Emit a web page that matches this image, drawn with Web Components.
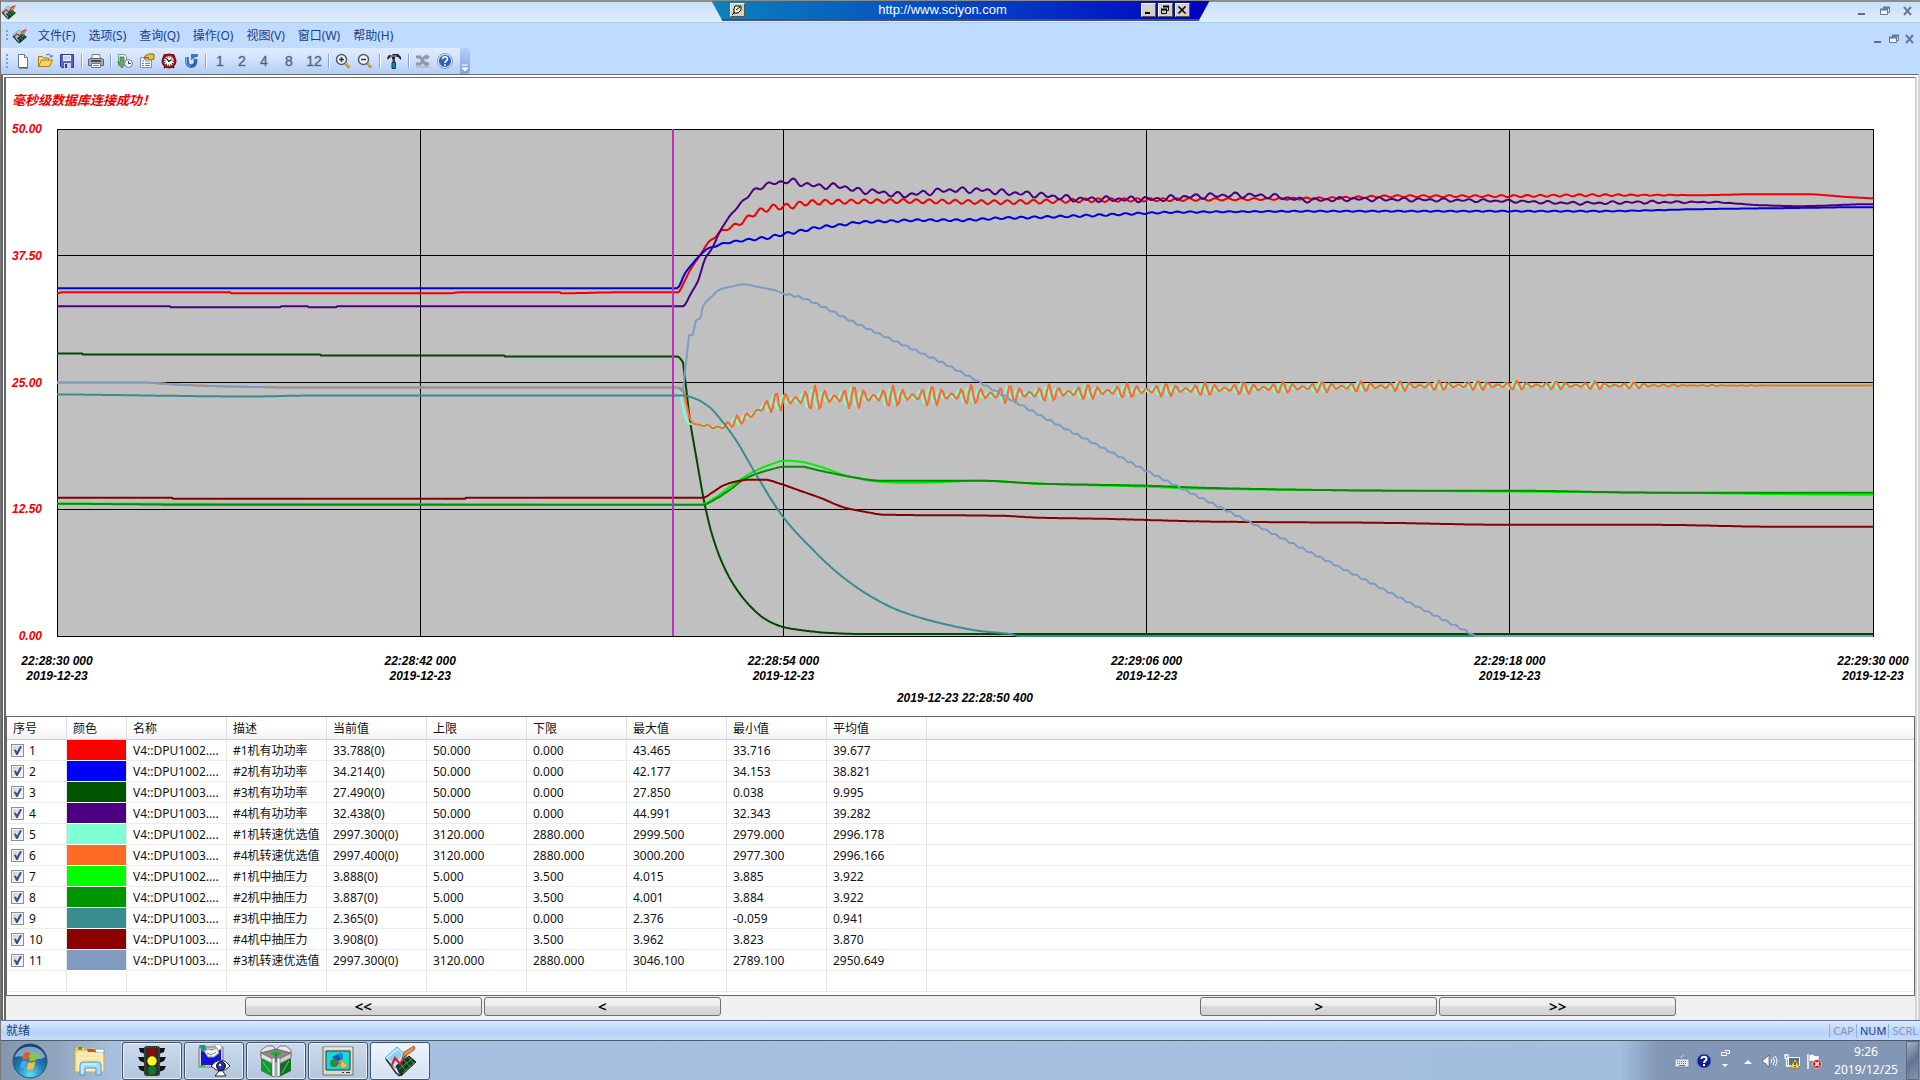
<!DOCTYPE html>
<html lang="zh-CN">
<head>
<meta charset="utf-8">
<title>趋势</title>
<style>
  html, body { margin: 0; }
  body { font: 12px/16px "Noto Sans", "Noto Sans CJK SC", sans-serif; color: #111; }
</style>
</head>
<body>
<trend-app></trend-app>

<script>
// [box size, svg body]
const ICONS = {
  app: [16, `<path d="M1 7 7 2l6 4-6 6z" fill="#8fd8ee" stroke="#5a9ab4" stroke-width=".6"/><path d="M2 9l3-3 3 2 3-5 3-1" fill="none" stroke="#d22" stroke-width="1.400"/><path d="M5 10l6-4 4 3-7 6z" fill="#123c1c"/><path d="M6 12l6-5M8 9l3 3M10 8l3 2" stroke="#3fa060" stroke-width=".7"/><path d="M9 5l6-4-1 3-3 2z" fill="#d9823a"/><path d="M1 8l5 6 2 1" fill="none" stroke="#333" stroke-width="1.200"/>`],
  file: [16, `<path d="M3.500 1.500h6l3 3v10h-9z" fill="#fff" stroke="#6b7a90"/><path d="M9.500 1.500v3h3" fill="#dbe6f5" stroke="#6b7a90"/><path d="M4 15h9" stroke="#444"/>`],
  open: [16, `<path d="M1.500 13.500v-10h4l1 1.500h5v2" fill="#f7dc86" stroke="#a87a16"/><path d="M1.500 13.500l3-6.500h11l-3 6.500z" fill="#ffd45c" stroke="#a87a16"/><path d="M9 2c3-1.500 5-.5 5.500 2M12.500 3l2 1.500 1-2.500" fill="none" stroke="#4478b8"/>`],
  save: [16, `<path d="M1.500 1.500h13v13h-12l-1-1z" fill="#5a62c4" stroke="#343b8c"/><path d="M4 2h8v6H4z" fill="#eef2ff"/><path d="M5 4h6M5 6h6" stroke="#a5b0dc"/><path d="M5 10h7v5H5z" fill="#c9d0ee"/><path d="M6 11h2v4H6z" fill="#343b8c"/>`],
  print: [16, `<path d="M4.500 1.500h7l1 4.500h-9z" fill="#fff" stroke="#777"/><path d="M.5 6.500l2-1h11l2 1v6h-15z" fill="#a9adb5" stroke="#5c6068"/><path d="M3 8h10" stroke="#4a4d55" stroke-width="2"/><path d="M3.500 10.500h9v4h-9z" fill="#f7fafc" stroke="#777"/><path d="M5 12.500h6" stroke="#4a8ccc"/><path d="M13 9h1" stroke="#4c4"/>`],
  fetch: [16, `<path d="M1.500 1.500h6l2 2v9h-8z" fill="#eef4fb" stroke="#7d90ac"/><path d="M3 4v5H.5L5 15l4-6H7V4z" fill="#5fae5c" stroke="#397c38" stroke-width=".8"/><circle cx="11.500" cy="10.500" r="4" fill="#e8eefa" stroke="#6f7fb0"/><path d="M11.500 8v2.500h2.500" fill="none" stroke="#445"/>`],
  props: [16, `<path d="M1.500 4.500h11v10h-11z" fill="#f8fafd" stroke="#7d90ac"/><path d="M3 8h2M6 8h5M3 10.500h2M6 10.500h5M3 12.500h2M6 12.500h5" stroke="#6b86b0"/><path d="M6 3l4-2h5v5l-3 1-3-1H5z" fill="#e8c23c" stroke="#8c6a10"/><path d="M6 4.500h4" stroke="#8c6a10"/>`],
  alarm: [16, `<path d="M3 1h3L2 5V3zM13 1h-3l4 4V3z" fill="#c01010"/><path d="M3 15l2-2M13 15l-2-2" stroke="#111" stroke-width="1.500"/><circle cx="8" cy="8" r="6" fill="#fff" stroke="#c00c0c" stroke-width="2"/><circle cx="8" cy="8" r="7" fill="none" stroke="#300" stroke-width=".8"/><circle cx="8" cy="8" r="4.200" fill="none" stroke="#111" stroke-width="1.200" stroke-dasharray="1 1.200"/><path d="M5.500 5.500L8 8.500l2.500-2" fill="none" stroke="#111" stroke-width="1.200"/>`],
  refresh: [16, `<path d="M4 4v5c0 5.500 8.500 5.500 8.500 0V6" fill="none" stroke="#2d62b8" stroke-width="3.500"/><path d="M3.500 4v5c0 3 2 4 4 4" fill="none" stroke="#86b6ee" stroke-width="1"/><path d="M8 7V1h7v2.500l-3 1z" fill="#3d76c8"/>`],
  zoomin: [16, `<circle cx="6.500" cy="6.500" r="5" fill="#eef4fb" stroke="#525b66" stroke-width="1.500"/><path d="M4 6.500h5M6.500 4v5" stroke="#333" stroke-width="1.500"/><path d="M10.500 10.500l4 4" stroke="#b88a20" stroke-width="3"/><path d="M10.500 10l4.500 4" stroke="#f0cf6a"/>`],
  zoomout: [16, `<circle cx="6.500" cy="6.500" r="5" fill="#eef4fb" stroke="#525b66" stroke-width="1.500"/><path d="M4 6.500h5" stroke="#333" stroke-width="1.500"/><path d="M10.500 10.500l4 4" stroke="#b88a20" stroke-width="3"/><path d="M10.500 10l4.500 4" stroke="#f0cf6a"/>`],
  hammer: [16, `<path d="M1 5l2-3h3l1-1 5 0 3 3v3l-3-3H9v2H6V4L3 5 2 7z" fill="#222"/><path d="M4 3h7" stroke="#bbb"/><path d="M6.500 6h2.500v4H6.500z" fill="#444"/><path d="M6 9.500h3.500V15.500H6z" fill="#1c86b4" stroke="#0b3850"/>`],
  shuffle: [16, `<path d="M1 4h4l5 7h3M1 11h4l2-2M8 6l2-2h2" fill="none" stroke="#9098a8" stroke-width="3"/><path d="M11 1l4 3-4 3zM11 8l4 3-4 3z" fill="#9098a8"/><path d="M1 14h14" stroke="#a5acbc"/>`],
  help: [16, `<circle cx="8" cy="8" r="6.800" fill="#2a5fc8" stroke="#dbe3f0" stroke-width="1.500"/><circle cx="8" cy="8" r="7.500" fill="none" stroke="#5a6d92" stroke-width=".6"/><path d="M5.500 6.200C5.500 3 10.500 3 10.500 6c0 2-2.500 1.800-2.500 4" fill="none" stroke="#fff" stroke-width="1.700"/><path d="M7.100 11.200h1.800v1.600H7.100z" fill="#fff"/>`],
  min: [12, `<path d="M2 9h7" stroke="#5a6f92" stroke-width="2"/>`],
  restore: [12, `<path d="M4.500 2.500h6v5h-2" fill="none" stroke="#66799a"/><path d="M1.500 4.500h7v5h-7z" fill="#eef5ff" stroke="#66799a"/><path d="M1 4.500h8M4 2.500h7" stroke="#66799a" stroke-width="2"/>`],
  close: [12, `<path d="M2 2l7 8M9 2l-7 8" stroke="#66799a" stroke-width="2"/>`],
  pin: [12, `<path d="M4 2h6v4L7 9H3V5z" fill="#fff6c0" stroke="#000"/><path d="M5 6l4-3M1 11l3-3" stroke="#000"/>`],
  rmin: [12, `<path d="M3 9h5" stroke="#000" stroke-width="2"/>`],
  rrestore: [12, `<path d="M4.500 2.500h5v4h-2" fill="none" stroke="#000"/><path d="M4 2.500h6" stroke="#000" stroke-width="2"/><path d="M2.500 5.500h5v4h-5z" fill="none" stroke="#000"/><path d="M2 5.500h6" stroke="#000" stroke-width="2"/>`],
  rclose: [12, `<path d="M2.500 2.500l7 7M9.500 2.500l-7 7" stroke="#000" stroke-width="1.600"/>`],
  start: [36, `<defs><radialGradient id="o" cx=".5" cy=".9" r=".9"><stop offset="0" stop-color="#5fe0f8"/><stop offset=".45" stop-color="#1f7fb8"/><stop offset="1" stop-color="#103a66"/></radialGradient></defs><circle cx="18" cy="18" r="17" fill="url(#o)" stroke="#31536f"/><path d="M3 14C6 0 30 0 33 14 24 20 12 11 3 14z" fill="#d9e8f2" opacity=".55"/><path d="M12 10c2-1.500 4-1 6 0l-2 7c-2-1-4-1-6 0z" fill="#e8592a"/><path d="M19 10.500c2 1 4 1 7-.5l-2 7c-2 1-5 1.500-7 .5z" fill="#8cc63c"/><path d="M9.500 18.500c2-1 4-1 6 0l-2 7c-2-1-4-1-6 0z" fill="#49a5e8"/><path d="M16.500 19c2 1 4 1 7-.5l-2 7c-2 1.500-5 1.500-7 .5z" fill="#fbc02d"/>`],
  folder: [34, `<path d="M2 4l4-2 6 2v3H2z" fill="#f5dd86" stroke="#c9a545"/><path d="M5 3h4v5H5z" fill="#3f9c58"/><path d="M2 6h14l2-2h13v24H2z" fill="#f6e29a" stroke="#cfae52"/><path d="M14 5h8l2 3h-9z" fill="#c65238"/><path d="M22 5h9v4h-8z" fill="#fff" stroke="#6ba0cc"/><path d="M4 9h26v18H4z" fill="#fbedb6"/><path d="M6 12h22M6 16h22" stroke="#f0dc92"/><path d="M7 31V21q0-3 3-3h15q3 0 3 3v10h-5v-7H12v7z" fill="#a9dcf5" stroke="#4d98c8"/><path d="M9 29v-7q0-2 3-2h11" fill="none" stroke="#e9f8ff"/>`],
  traffic: [32, `<path d="M3 3h6v6L4 7zM29 3h-6v6l5-2zM2 12h7v6l-5-2zM30 12h-7v6l5-2zM2 21h7v6l-5-2zM30 21h-7v6l5-2z" fill="#111"/><rect x="8" y="1" width="16" height="30" rx="3" fill="#2a2a2a"/><rect x="9" y="2" width="14" height="28" rx="2" fill="none" stroke="#777" stroke-dasharray="1 1"/><circle cx="16" cy="7" r="4.500" fill="#8c0c0c"/><circle cx="16" cy="16" r="4.700" fill="#ffff20"/><circle cx="16" cy="25" r="4.500" fill="#0a7a28"/>`],
  watch: [32, `<path d="M1 2h24v20H1z" fill="#d8d8d0" stroke="#777"/><path d="M3 4h20v16H3z" fill="#1414d8"/><path d="M1 0h6l2 5-5 2z" fill="#1d9590"/><path d="M17 0l5-1 2 4-4 3z" fill="#fff" stroke="#999" stroke-width=".6"/><path d="M6 6l4-2 4 1 5-2 2 5-5 4H10z" fill="#f3f3f3" stroke="#999"/><path d="M9 8l4 2 5-3" fill="none" stroke="#888"/><path d="M2 21h5" stroke="#2d2" stroke-width="2"/><path d="M21 26l-4 5h11l-4-6z" fill="#fff" stroke="#222"/><path d="M13 21q10-12 19 0-9 10-19 0z" fill="#fff" stroke="#222"/><circle cx="23" cy="21" r="4.500" fill="#2030b8" stroke="#111"/><circle cx="22" cy="20" r="1.200" fill="#fff"/>`],
  hall: [32, `<path d="M1 5l6-4h6l3 4 4-4h6l5 4v6H1z" fill="#e8e8e8" stroke="#777"/><path d="M1 8l15-4 15 4-15 9z" fill="#8f888c" stroke="#666"/><path d="M10 8l6-2 6 2-6 4z" fill="#1fae2f"/><path d="M16 8v7" stroke="#555"/><path d="M1 8l12 6v18L1 26z" fill="#109a30"/><path d="M1 8l12 6v5L1 13z" fill="#e4e4e4" stroke="#777"/><path d="M31 8l-12 6v18l12-6z" fill="#0b7424"/><path d="M31 8l-12 6v5l12-6z" fill="#d0d0d0" stroke="#777"/><path d="M12 13h3v19l-3-1zM17 13h3v18l-3 1z" fill="#fff" stroke="#555" stroke-width=".6"/><path d="M3 17l7 10M22 28l7-12" stroke="#7de08c" stroke-width=".8"/>`],
  monitor: [32, `<path d="M1 2h30v28H1z" fill="#dcd8cc" stroke="#6f6f6f"/><path d="M2 3h28" stroke="#fff"/><path d="M4 6h24v19H4z" fill="#19d8d8" stroke="#333"/><path d="M10 12l6-3 5 4-6 4z" fill="#145aa0"/><path d="M17 7l4 2v6l-4-3z" fill="#2088d8"/><circle cx="12" cy="18" r="4" fill="#2a9048"/><path d="M15 16l3 2-5 4z" fill="#d8342a"/><path d="M20 14l6 8q-5 2-8 0z" fill="#f5c320" stroke="#a87a08" stroke-width=".5"/><path d="M20 27.500h2M24 27.500h4" stroke="#333"/>`],
  trend: [32, `<path d="M1 13 13 2l10 9-12 12z" fill="#bfe8fa" stroke="#5aa8d8"/><path d="M4 13 14 5l5 5-9 9z" fill="#8fd0f2"/><path d="M12 21l13-10 7 6-15 14z" fill="#123c1c" stroke="#222"/><path d="M15 24l13-10M19 28l12-11M16 18l6 8M20 15l6 7M24 12l6 7" stroke="#58b878" stroke-width=".7"/><path d="M2 14l10 14 4 3" fill="none" stroke="#333" stroke-width="1.600"/><path d="M7 22l4-9 5 6 6-10 3-2" fill="none" stroke="#d81f2a" stroke-width="2"/><path d="M20 7l10-6q2 2 0 4l-9 6-3 3z" fill="#e8924a" stroke="#8c3d18" stroke-width=".7"/>`],
  keyboard: [16, `<path d="M7 6V4l3-2" fill="none" stroke="#c5ccd6"/><rect x="1" y="6" width="14" height="8" rx="1" fill="#e4e8ee" stroke="#63738c" stroke-width=".7"/><path d="M3 8.500h10M3 10.500h10" stroke="#63738c" stroke-dasharray="1 1"/><path d="M5 12.500h6" stroke="#63738c"/>`],
  bighelp: [16, `<circle cx="8" cy="8" r="7" fill="#101c98" stroke="#5a74c8"/><path d="M5.500 6C5.500 3 10.500 3 10.500 6c0 2-2.500 1.800-2.500 4" fill="none" stroke="#fff" stroke-width="2"/><path d="M7 11h2v2H7z" fill="#fff"/>`],
  lang: [16, `<path d="M6.500-2.500h5v3h-2M3.500-.5h5v3h-5z" fill="none" stroke="#fff"/><path d="M4 11h6l-3 3z" fill="#fff"/>`],
  up: [16, `<path d="M4 11l4-4 4 4z" fill="#fff"/>`],
  sound: [16, `<path d="M1 6h2l4-4v12l-4-4H1z" fill="#fff" stroke="#4a5c78" stroke-width=".7"/><path d="M9 6q1 2 0 4M11 4q3 4 0 8M13 3q4 5 0 10" fill="none" stroke="#fff"/>`],
  net: [16, `<path d="M4.500 4.500h11v8h-11z" fill="#5c6e8a" stroke="#fff"/><path d="M1 1v3q0 2 1.500 2v7H7M4 1v3q0 2-1.500 2M2 1v2" fill="none" stroke="#fff" stroke-width="1.300"/><path d="M11 6l5 9H6z" fill="#ffd83a" stroke="#8c6c00" stroke-width=".6"/><path d="M11 9v3M11 13v1" stroke="#222" stroke-width="1.400"/>`],
  flag: [16, `<path d="M2 1v15" stroke="#fff" stroke-width="1.500"/><path d="M3 2q3-2 5 0t5 0v7q-3 2-5 0T3 9z" fill="#fff" stroke="#56667e" stroke-width=".5"/><circle cx="11" cy="11" r="4.500" fill="#d8202a" stroke="#fff" stroke-width=".6"/><path d="M9 9l4 4M13 9l-4 4" stroke="#fff" stroke-width="1.500"/>`],
  more: [10, `<path d="M2 3h6M5 9l3-3H2z" fill="#fff" stroke="#fff"/>`]
};

class SysIcon extends HTMLElement {
  constructor() {
    super();
    this.attachShadow({ mode: 'open' });
  }
  connectedCallback() {
    const [box, body] = ICONS[this.getAttribute('name')];
    this.shadowRoot.innerHTML = `
      <style>
        :host { display:inline-flex; flex:none; }
        svg { display:block; overflow:visible; }
      </style>
      <svg width="${box}" height="${box}" viewBox="0 0 ${box} ${box}" aria-hidden="true">${body}</svg>`;
  }
}
customElements.define('sys-icon', SysIcon);

// every element below only differs in its static markup
class Part extends HTMLElement {
  constructor() {
    super();
    this.attachShadow({ mode: 'open' }).innerHTML = this.html();
  }
}

customElements.define('remote-bar', class extends Part {
  html() {
    return `
      <style>
        :host { display:flex; align-items:center; gap:2px; height:20px; width:498px; box-sizing:border-box; padding:0 20px 2px 18px;
          clip-path:polygon(0 0, 100% 0, 487px 100%, 11px 100%);
          background:linear-gradient(#0000 18px, #4a5068 18px), linear-gradient(90deg, #0c82bc, #0438c4 60%, #0000c0); }
        a { flex:1; text-align:center; color:#fff; text-decoration:none; font:13px/16px "Liberation Sans", sans-serif; }
        button { width:15px; height:14px; padding:0; display:flex; align-items:center; justify-content:center;
          background:#d4d0c8; border:1px solid; border-color:#fff #555 #555 #fff; }
      </style>
      <button aria-label="Pin"><sys-icon name="pin"></sys-icon></button>
      <a href="#">http://www.sciyon.com</a>
      <button aria-label="Minimize"><sys-icon name="rmin"></sys-icon></button>
      <button aria-label="Restore"><sys-icon name="rrestore"></sys-icon></button>
      <button aria-label="Close"><sys-icon name="rclose"></sys-icon></button>`;
  }
});

customElements.define('title-bar', class extends Part {
  html() {
    return `
      <style>
        :host { display:flex; align-items:center; height:23px; box-sizing:border-box; padding:0 6px 0 0; position:relative;
          border-top:2px solid #8c8d88; border-bottom:1px solid #a8ccf2; background:linear-gradient(#cbdff8, #e3edf9); }
        .gap { flex:1; }
        .win { display:flex; gap:11px; }
        .win button { padding:0; border:0; background:none; width:12px; height:16px; }
        remote-bar { position:absolute; top:-1px; left:calc(50% - 249px); }
      </style>
      <sys-icon name="app"></sys-icon>
      <span class="gap"></span>
      <span class="win">
        <button aria-label="最小化"><sys-icon name="min"></sys-icon></button>
        <button aria-label="还原"><sys-icon name="restore"></sys-icon></button>
        <button aria-label="关闭"><sys-icon name="close"></sys-icon></button>
      </span>
      <remote-bar></remote-bar>`;
  }
});

const MENUS = ['文件(F)', '选项(S)', '查询(Q)', '操作(O)', '视图(V)', '窗口(W)', '帮助(H)'];

customElements.define('menu-bar', class extends Part {
  html() {
    return `
      <style>
        :host { display:flex; align-items:center; height:25px; padding:0 4px 0 5px; background:#bfdbff; }
        .grip { width:2px; height:12px; margin-right:4px; background:repeating-linear-gradient(#7f9fd0 0 2px, #0000 2px 4px); }
        nav { flex:1; display:flex; margin-left:3px; }
        nav button { border:0; background:none; padding:0 6px 0 7px; font:inherit; color:#1c3e86; white-space:nowrap; }
        .win { display:flex; gap:4px; align-self:flex-end; }
        .win button { padding:0; border:0; background:none; width:12px; height:16px; }
      </style>
      <span class="grip"></span><sys-icon name="app"></sys-icon>
      <nav>${MENUS.map(m => `<button>${m}</button>`).join('')}</nav>
      <span class="win">
        <button aria-label="最小化"><sys-icon name="min"></sys-icon></button>
        <button aria-label="还原"><sys-icon name="restore"></sys-icon></button>
        <button aria-label="关闭"><sys-icon name="close"></sys-icon></button>
      </span>`;
  }
});

const TOOLS = ['file', 'open', 'save', '|', 'print', '|', 'fetch', 'props', 'alarm', 'refresh', '|',
  '1', '2', '4', '8', '12', '|', 'zoomin', 'zoomout', '|', 'hammer', '|', 'shuffle', 'help'];

customElements.define('tool-bar', class extends Part {
  html() {
    const items = TOOLS.map(t => {
      if (t === '|') return '<i></i>';
      if (ICONS[t]) return `<button aria-label="${t}"><sys-icon name="${t}"></sys-icon></button>`;
      return `<button class="num">${t}</button>`;
    });
    return `
      <style>
        :host { display:flex; height:26px; background:#bfdbff; }
        .strip { display:flex; align-items:center; padding-left:5px; border-radius:0 4px 4px 0; background:linear-gradient(#dfecff, #cfe1fc 45%, #b3cdf4); }
        .grip { width:2px; height:14px; margin-right:4px; background:repeating-linear-gradient(#7f9fd0 0 2px, #0000 2px 4px); }
        button { width:22px; height:22px; padding:0; border:0; background:none; display:flex; align-items:center; justify-content:center; }
        .num { font:14px/16px "Liberation Sans", sans-serif; color:#4f5b6c; -webkit-text-stroke:1px #5f6b7c55; }
        .num:nth-of-type(12) { width:28px; }
        i { width:1px; height:14px; margin:0 3px; background:#7fa5dc; box-shadow:1px 0 #fff; }
        .more { width:10px; height:26px; margin-left:4px; align-items:flex-end; padding-bottom:2px; border-radius:0 4px 4px 0;
          background:linear-gradient(#b5d0f5, #7fa4dc); }
      </style>
      <div class="strip"><span class="grip"></span>${items.join('')}
        <button class="more" aria-label="更多"><sys-icon name="more"></sys-icon></button></div>`;
  }
});

// drawing space of the plot; curve nodes are given in it
const BOX = { x: 57, y: 129, w: 1816, h: 506 };

const interp = (nodes, x) => {
  for (let i = 1; i < nodes.length; i++) {
    const [x0, y0] = nodes[i - 1], [x1, y1] = nodes[i];
    if (x <= x1) return y0 + (y1 - y0) * (x - x0) / (x1 - x0);
  }
  return nodes[nodes.length - 1][1];
};

// monotone cubic: rounds the curve without overshoot
const smooth = (nodes, x) => {
  const slope = i => (nodes[i + 1][1] - nodes[i][1]) / (nodes[i + 1][0] - nodes[i][0]);
  const tangent = i => {
    if (i === 0 || i === nodes.length - 1) return 0;
    const a = slope(i - 1), b = slope(i);
    return a * b <= 0 ? 0 : 2 * a * b / (a + b);
  };
  for (let i = 1; i < nodes.length; i++) {
    const [x0, y0] = nodes[i - 1], [x1, y1] = nodes[i];
    if (x > x1) continue;
    const d = x1 - x0, t = (x - x0) / d;
    return y0 * (1 + 2 * t) * (1 - t) ** 2 + y1 * t * t * (3 - 2 * t) +
      d * (tangent(i - 1) * t * (1 - t) ** 2 - tangent(i) * t * t * (1 - t));
  }
  return nodes[nodes.length - 1][1];
};
const wave = (x, period, shift = 0) => Math.sin((x - shift) / period * 2 * Math.PI);

const POWER_AMP = [[57, 0], [690, 0], [710, 1], [745, 2], [770, 3], [860, 2], [1100, 2], [1250, 1], [1600, 1], [1700, 0], [1873, 0]];
const P4_AMP = [[57, 0], [690, 0], [710, 1], [800, 2], [1180, 2], [1500, 1], [1650, 1], [1750, 0], [1873, 0]];
const SPEED_AMP = [[57, 0], [700, 0], [715, 4], [760, 7], [780, 11], [815, 13], [900, 11], [1000, 10], [1100, 8], [1200, 7], [1300, 6], [1500, 5], [1600, 4], [1650, 3], [1670, 1], [1800, 0], [1873, 0]];
const SPEED = [[57, 382], [142, 382], [175, 384], [230, 386], [300, 387], [677, 387], [683, 389], [686, 402], [690, 418], [693, 423], [705, 425], [718, 427], [735, 421], [750, 415], [765, 406], [783, 400], [815, 398], [900, 396], [1000, 394], [1146, 390], [1300, 387], [1500, 385], [1600, 385], [1873, 385]];

const surge = (x, c) => {
  const env = Math.pow(Math.cos((x - 815) / 39 * Math.PI), 2);
  return -interp(SPEED_AMP, x) * (0.2 + 0.8 * env) * Math.cos((x - c) / 9.75 * 2 * Math.PI);
};

const CURVES = [
  { color: '#f00000', nodes: [[57, 293], [62, 292], [230, 292], [231, 293], [450, 293], [460, 292], [560, 292], [561, 293], [620, 292], [678, 292], [684, 282], [690, 270], [698, 258], [705, 247], [713, 238], [722, 231], [733, 226], [742, 222], [750, 216], [760, 211], [775, 207], [790, 206], [805, 203], [820, 202], [900, 201], [1000, 202], [1100, 200], [1250, 199], [1330, 198], [1400, 196], [1500, 196], [1600, 195], [1700, 195], [1760, 194], [1805, 194], [1850, 197], [1873, 198]],
    ripple: x => -interp(POWER_AMP, x) * wave(x, 13, 757) },
  { color: '#0000e0', nodes: [[57, 288], [677, 288], [685, 273], [692, 264], [700, 255], [705, 250], [715, 246], [725, 243], [745, 240], [770, 237], [783, 234], [800, 231], [820, 227], [840, 225], [860, 222], [890, 221], [920, 220], [960, 220], [1000, 218], [1040, 217], [1100, 215], [1146, 213], [1180, 212], [1350, 211], [1600, 211], [1700, 209], [1780, 208], [1873, 207]],
    ripple: x => -interp(POWER_AMP, x) * wave(x, 13, 719) * .5 },
  { color: '#004800', nodes: [[57, 353], [82, 353], [83, 354], [320, 354], [321, 355], [504, 355], [505, 356], [677, 356], [683, 362], [685, 378], [687, 395], [690, 420], [696, 455], [705, 505], [713, 537], [724, 566], [735, 586], [750, 605], [765, 618], [783, 626], [800, 629], [830, 632], [862, 633], [1873, 633]] },
  { color: '#480080', nodes: [[57, 306], [170, 306], [171, 307], [280, 307], [281, 306], [308, 306], [309, 307], [336, 307], [337, 306], [683, 306], [690, 295], [698, 280], [706, 257], [714, 245], [722, 226], [728, 220], [735, 209], [745, 199], [760, 187], [775, 183], [790, 181], [800, 183], [820, 186], [840, 186], [855, 190], [880, 192], [900, 195], [930, 192], [950, 190], [980, 190], [1000, 192], [1030, 194], [1060, 197], [1080, 199], [1150, 199], [1200, 196], [1240, 195], [1270, 196], [1310, 200], [1350, 199], [1450, 200], [1510, 201], [1580, 203], [1650, 202], [1710, 202], [1760, 205], [1800, 206], [1873, 204]],
    ripple: x => interp(P4_AMP, x) * (wave(x, 13, 784) + wave(x, 21) * .6) },
  { color: '#7fffd4', nodes: SPEED.map(([x, y]) => [x > 670 && x < 700 ? x - 4 : x, y]), ripple: x => surge(x + 3, 815) * .8 },
  { color: '#ff6a24', nodes: SPEED, ripple: x => surge(x, 815) },
  { color: '#00f000', nodes: [[57, 503], [700, 504], [715, 497], [730, 486], [750, 473], [770, 464], [785, 460], [800, 461], [820, 466], [850, 476], [880, 481], [900, 482], [920, 482], [980, 480], [1040, 483], [1146, 486], [1200, 488], [1400, 490], [1660, 492], [1873, 494]] },
  { color: '#009000', nodes: [[57, 503], [195, 504], [440, 504], [703, 504], [716, 498], [730, 489], [745, 478], [770, 469], [785, 466], [800, 466], [820, 470], [850, 476], [880, 480], [980, 480], [1040, 483], [1146, 485], [1200, 487], [1300, 489], [1400, 490], [1510, 490], [1660, 492], [1873, 492]] },
  { color: '#388e8e', nodes: [[57, 394], [150, 395], [250, 396], [310, 395], [683, 395], [695, 398], [710, 407], [720, 418], [735, 438], [755, 472], [783, 516], [810, 546], [840, 574], [870, 595], [900, 610], [940, 622], [980, 630], [1010, 633], [1020, 635], [1873, 635]] },
  { color: '#840000', nodes: [[57, 497], [172, 497], [173, 498], [465, 498], [466, 497], [703, 497], [712, 492], [723, 485], [735, 481], [750, 479], [765, 479], [780, 483], [800, 490], [820, 497], [845, 507], [865, 511], [885, 514], [1000, 515], [1040, 517], [1100, 518], [1222, 521], [1380, 522], [1508, 524], [1650, 524], [1783, 526], [1873, 526]] },
  { color: '#7f9cc0', nodes: [[57, 382], [142, 382], [175, 384], [230, 386], [300, 387], [677, 387], [683, 391], [685, 370], [688, 345], [689, 335], [693, 334], [696, 320], [700, 318], [703, 306], [712, 296], [720, 289], [733, 286], [743, 284], [760, 287], [775, 290], [783, 293], [800, 297], [820, 305], [850, 320], [900, 343], [950, 366], [1000, 393], [1046, 418], [1108, 450], [1146, 470], [1225, 509], [1291, 542], [1361, 577], [1414, 604], [1472, 633], [1476, 635], [1873, 635]],
    ripple: x => x > 783 && x < 1472 ? wave(x, 9) : 0 }
];

const curvePath = ({ nodes, ripple }) => {
  const xs = new Set(nodes.map(n => n[0]));
  for (let x = BOX.x; x < BOX.x + BOX.w; x += 2) xs.add(x);
  return 'M' + [...xs].sort((a, b) => a - b)
    .map(x => `${x} ${(smooth(nodes, x) + (ripple ? ripple(x) : 0)).toFixed(1)}`).join('L');
};

customElements.define('trend-chart', class extends Part {
  html() {
    const { x, y, w, h } = BOX;
    const grid = [1, 2, 3, 4].map(i => `M${x + w * i / 5} ${y}v${h}`).join('') +
      [1, 2, 3].map(i => `M${x} ${y + h * i / 4}h${w}`).join('');
    const times = ['22:28:30', '22:28:42', '22:28:54', '22:29:06', '22:29:18', '22:29:30'];
    return `
      <style>
        :host { display:grid; grid-template:51px minmax(300px, 1fr) 80px / 51px 1fr 42px; background:#fff;
          font:italic bold 12px/15px "Liberation Sans", "Noto Sans CJK SC", sans-serif; }
        .msg { grid-column:1 / -1; padding:15px 0 0 6px; font-size:13px; line-height:16px; color:#f00000; }
        .ys { display:flex; flex-direction:column; justify-content:space-between; align-items:flex-end; margin:-8px 15px -8px 0;
          line-height:16px; color:#f00000; }
        .plot { position:relative; background:#c0c0c0; }
        svg { position:absolute; inset:0; width:100%; height:100%; overflow:visible; }
        path, rect { fill:none; vector-effect:non-scaling-stroke; }
        .grid { stroke:#000; stroke-width:1; shape-rendering:crispEdges; }
        .curve { stroke-width:2; stroke-linejoin:round; }
        .cursor { stroke:#c030c0; stroke-width:2; shape-rendering:crispEdges; }
        .xs { grid-column:2; padding-top:18px; color:#000; text-align:center; }
        .ticks { display:flex; justify-content:space-between; }
        .ticks div { width:0; display:flex; flex-direction:column; align-items:center; white-space:nowrap; }
        .now { margin-top:7px; }
      </style>
      <div class="msg">毫秒级数据库连接成功！</div>
      <div class="ys"><span>50.00</span><span>37.50</span><span>25.00</span><span>12.50</span><span>0.00</span></div>
      <div class="plot">
        <svg viewBox="${x} ${y} ${w} ${h}" preserveAspectRatio="none">
          <rect class="grid" x="${x}" y="${y}" width="${w}" height="${h}"/>
          <path class="grid" d="${grid}"/>
          ${CURVES.map(c => `<path class="curve" stroke="${c.color}" d="${curvePath(c)}"/>`).join('')}
          <path class="cursor" d="M673 ${y}v${h}"/>
        </svg>
      </div>
      <div class="xs">
        <div class="ticks">${times.map(t => `<div><span>${t} 000</span><span>2019-12-23</span></div>`).join('')}</div>
        <div class="now">2019-12-23 22:28:50 400</div>
      </div>`;
  }
});

const COLS = ['序号', '颜色', '名称', '描述', '当前值', '上限', '下限', '最大值', '最小值', '平均值'];
const ROWS = [
  ['#ff0000', 'V4::DPU1002....', '#1机有功功率', '33.788(0)', '50.000', '0.000', '43.465', '33.716', '39.677'],
  ['#0000ff', 'V4::DPU1002....', '#2机有功功率', '34.214(0)', '50.000', '0.000', '42.177', '34.153', '38.821'],
  ['#005500', 'V4::DPU1003....', '#3机有功功率', '27.490(0)', '50.000', '0.000', '27.850', '0.038', '9.995'],
  ['#4b0082', 'V4::DPU1003....', '#4机有功功率', '32.438(0)', '50.000', '0.000', '44.991', '32.343', '39.282'],
  ['#7fffd4', 'V4::DPU1002....', '#1机转速优选值', '2997.300(0)', '3120.000', '2880.000', '2999.500', '2979.000', '2996.178'],
  ['#ff6a24', 'V4::DPU1003....', '#4机转速优选值', '2997.400(0)', '3120.000', '2880.000', '3000.200', '2977.300', '2996.166'],
  ['#00ff00', 'V4::DPU1002....', '#1机中抽压力', '3.888(0)', '5.000', '3.500', '4.015', '3.885', '3.922'],
  ['#009600', 'V4::DPU1002....', '#2机中抽压力', '3.887(0)', '5.000', '3.500', '4.001', '3.884', '3.922'],
  ['#388e8e', 'V4::DPU1003....', '#3机中抽压力', '2.365(0)', '5.000', '0.000', '2.376', '-0.059', '0.941'],
  ['#8b0000', 'V4::DPU1003....', '#4机中抽压力', '3.908(0)', '5.000', '3.500', '3.962', '3.823', '3.870'],
  ['#7f9cc0', 'V4::DPU1003....', '#3机转速优选值', '2997.300(0)', '3120.000', '2880.000', '3046.100', '2789.100', '2950.649']
];

customElements.define('point-table', class extends Part {
  html() {
    const rows = ROWS.map(([color, ...cells], i) => `
      <tr><td class="no"><label><input type="checkbox" checked>${i + 1}</label></td>
        <td class="sw" style="background-color:${color}"></td>
        ${cells.map(c => `<td>${c}</td>`).join('')}<td></td></tr>`).join('');
    return `
      <style>
        :host { display:block; background:#fff; border:1px solid #666; padding-bottom:3px; }
        table { width:100%; table-layout:fixed; border-collapse:separate; border-spacing:0; }
        th, td { box-sizing:border-box; height:21px; padding:0 0 0 6px; text-align:left; font-weight:normal; white-space:nowrap;
          line-height:16px; border-right:1px solid #e6e6e6; border-bottom:1px solid #ececec; }
        th { height:23px; padding-top:1px; border-right-color:#dfe0e2; border-bottom-color:#d0d0d0; background:linear-gradient(#fff 45%, #f1f2f4); }
        td { padding-top:1px; }
        th:last-child, td:last-child { border-right:0; }
        .c6 { width:60px; }
        .c10 { width:100px; }
        .no { padding-left:4px; }
        .sw { border-bottom-color:#fff; }
        label { display:flex; align-items:center; gap:5px; }
        input { appearance:none; width:13px; height:13px; margin:0; box-sizing:border-box; border:1px solid #8a8f96;
          background:linear-gradient(135deg, #c9cfd8, #fafbfc); box-shadow:inset 0 0 0 1px #f4f4f4; position:relative; }
        input:checked::before { content:""; position:absolute; inset:1px; background:#3c4f86;
          clip-path:polygon(10% 45%, 30% 40%, 45% 62%, 78% 0, 100% 6%, 52% 100%, 36% 100%); }
      </style>
      <table>
        <colgroup><col class="c6"><col class="c6">${'<col class="c10">'.repeat(8)}<col></colgroup>
        <thead><tr>${COLS.map(c => `<th>${c}</th>`).join('')}<th></th></tr></thead>
        <tbody>${rows}<tr>${'<td></td>'.repeat(11)}</tr></tbody>
      </table>`;
  }
});

customElements.define('page-nav', class extends Part {
  html() {
    return `
      <style>
        :host { display:grid; grid-template-columns:repeat(8, 1fr); gap:2px; padding:1px 0 4px; background:#f0f0f0; }
        button { height:19px; padding:0; border:1px solid #707070; border-radius:3px; color:#000; font:600 15px/15px "Noto Sans", sans-serif;
          background:linear-gradient(#f4f4f4, #ebebeb 50%, #dcdcdc 50%, #d0d0d0); }
        .b2 { grid-column:2; }
        .f1 { grid-column:6; }
      </style>
      <button class="b2">&lt;&lt;</button><button>&lt;</button>
      <button class="f1">&gt;</button><button>&gt;&gt;</button>`;
  }
});

customElements.define('status-bar', class extends Part {
  html() {
    return `
      <style>
        :host { display:flex; align-items:center; height:20px; box-sizing:border-box; padding:0 2px 0 5px; color:#1c3e86;
          border-top:1px solid #5d7496; background:linear-gradient(#dce9fb, #b9d3f8 60%, #c6dcfb); }
        .msg { flex:1; }
        .key { padding:0 2px 0 3px; border-left:1px solid #8db2e3; font-size:11px; line-height:14px; }
        .key:last-child { padding-right:0; }
        .off { color:#8295b8; }
      </style>
      <span class="msg">就绪</span>
      <span class="key off">CAP</span><span class="key">NUM</span><span class="key off">SCRL</span>`;
  }
});

customElements.define('task-bar', class extends Part {
  html() {
    const apps = ['traffic', 'watch', 'hall', 'monitor', 'trend'];
    const tray = ['keyboard', 'bighelp', 'lang', 'up', 'sound', 'net', 'flag'];
    return `
      <style>
        :host { display:flex; align-items:center; height:40px; box-sizing:border-box; padding-right:1px; border-top:1px solid #4d5c70; color:#fff;
          background:linear-gradient(90deg, #8396ae, #93a7c1 60px, #a6bfdd 110px, #a3bfe0 calc(100% - 300px), #8297b3 calc(100% - 262px)); }
        button { padding:0; border:0; background:none; display:flex; align-items:center; justify-content:center; }
        .start { width:57px; }
        .exp { width:64px; height:100%; border-right:1px solid #c2d3ea; }
        .apps { display:flex; gap:2px; flex:1; }
        .apps button { width:60px; height:38px; box-sizing:border-box; border:1px solid #43556e; border-radius:3px;
          box-shadow:inset 0 0 0 1px #e6effa; background:linear-gradient(#ccdaeb, #b3c6de); }
        .apps .on { background:linear-gradient(#eef4fb, #d3e1f2); }
        .tray { display:flex; gap:6px; }
        time { width:80px; margin-left:4px; text-align:center; line-height:18px; }
        .show { width:13px; height:100%; border:1px solid #5b6c85; background:linear-gradient(135deg, #a5b4c8, #62748f 50%, #8494ab); }
      </style>
      <button class="start" aria-label="开始"><sys-icon name="start"></sys-icon></button>
      <button class="exp" aria-label="资源管理器"><sys-icon name="folder"></sys-icon></button>
      <div class="apps">${apps.map(a => `<button class="${a === 'trend' ? 'on' : ''}" aria-label="${a}"><sys-icon name="${a}"></sys-icon></button>`).join('')}</div>
      <div class="tray">${tray.map(t => `<sys-icon name="${t}"></sys-icon>`).join('')}</div>
      <time datetime="2019-12-25T09:26">9:26<br>2019/12/25</time>
      <button class="show" aria-label="显示桌面"></button>`;
  }
});

customElements.define('trend-app', class extends Part {
  html() {
    return `
      <style>
        :host { display:flex; flex-direction:column; min-height:100vh; box-sizing:border-box; border-left:1px solid #7a7a7a; background:#fff; }
        main { flex:1; display:flex; flex-direction:column; border-top:4px double #66707c; border-left:5px double #666; border-right:5px double #d4d4d4; }
        trend-chart { flex:1; }
      </style>
      <title-bar></title-bar>
      <menu-bar></menu-bar>
      <tool-bar></tool-bar>
      <main>
        <trend-chart></trend-chart>
        <point-table></point-table>
        <page-nav></page-nav>
      </main>
      <status-bar></status-bar>
      <task-bar></task-bar>`;
  }
});
</script>
</body>
</html>
